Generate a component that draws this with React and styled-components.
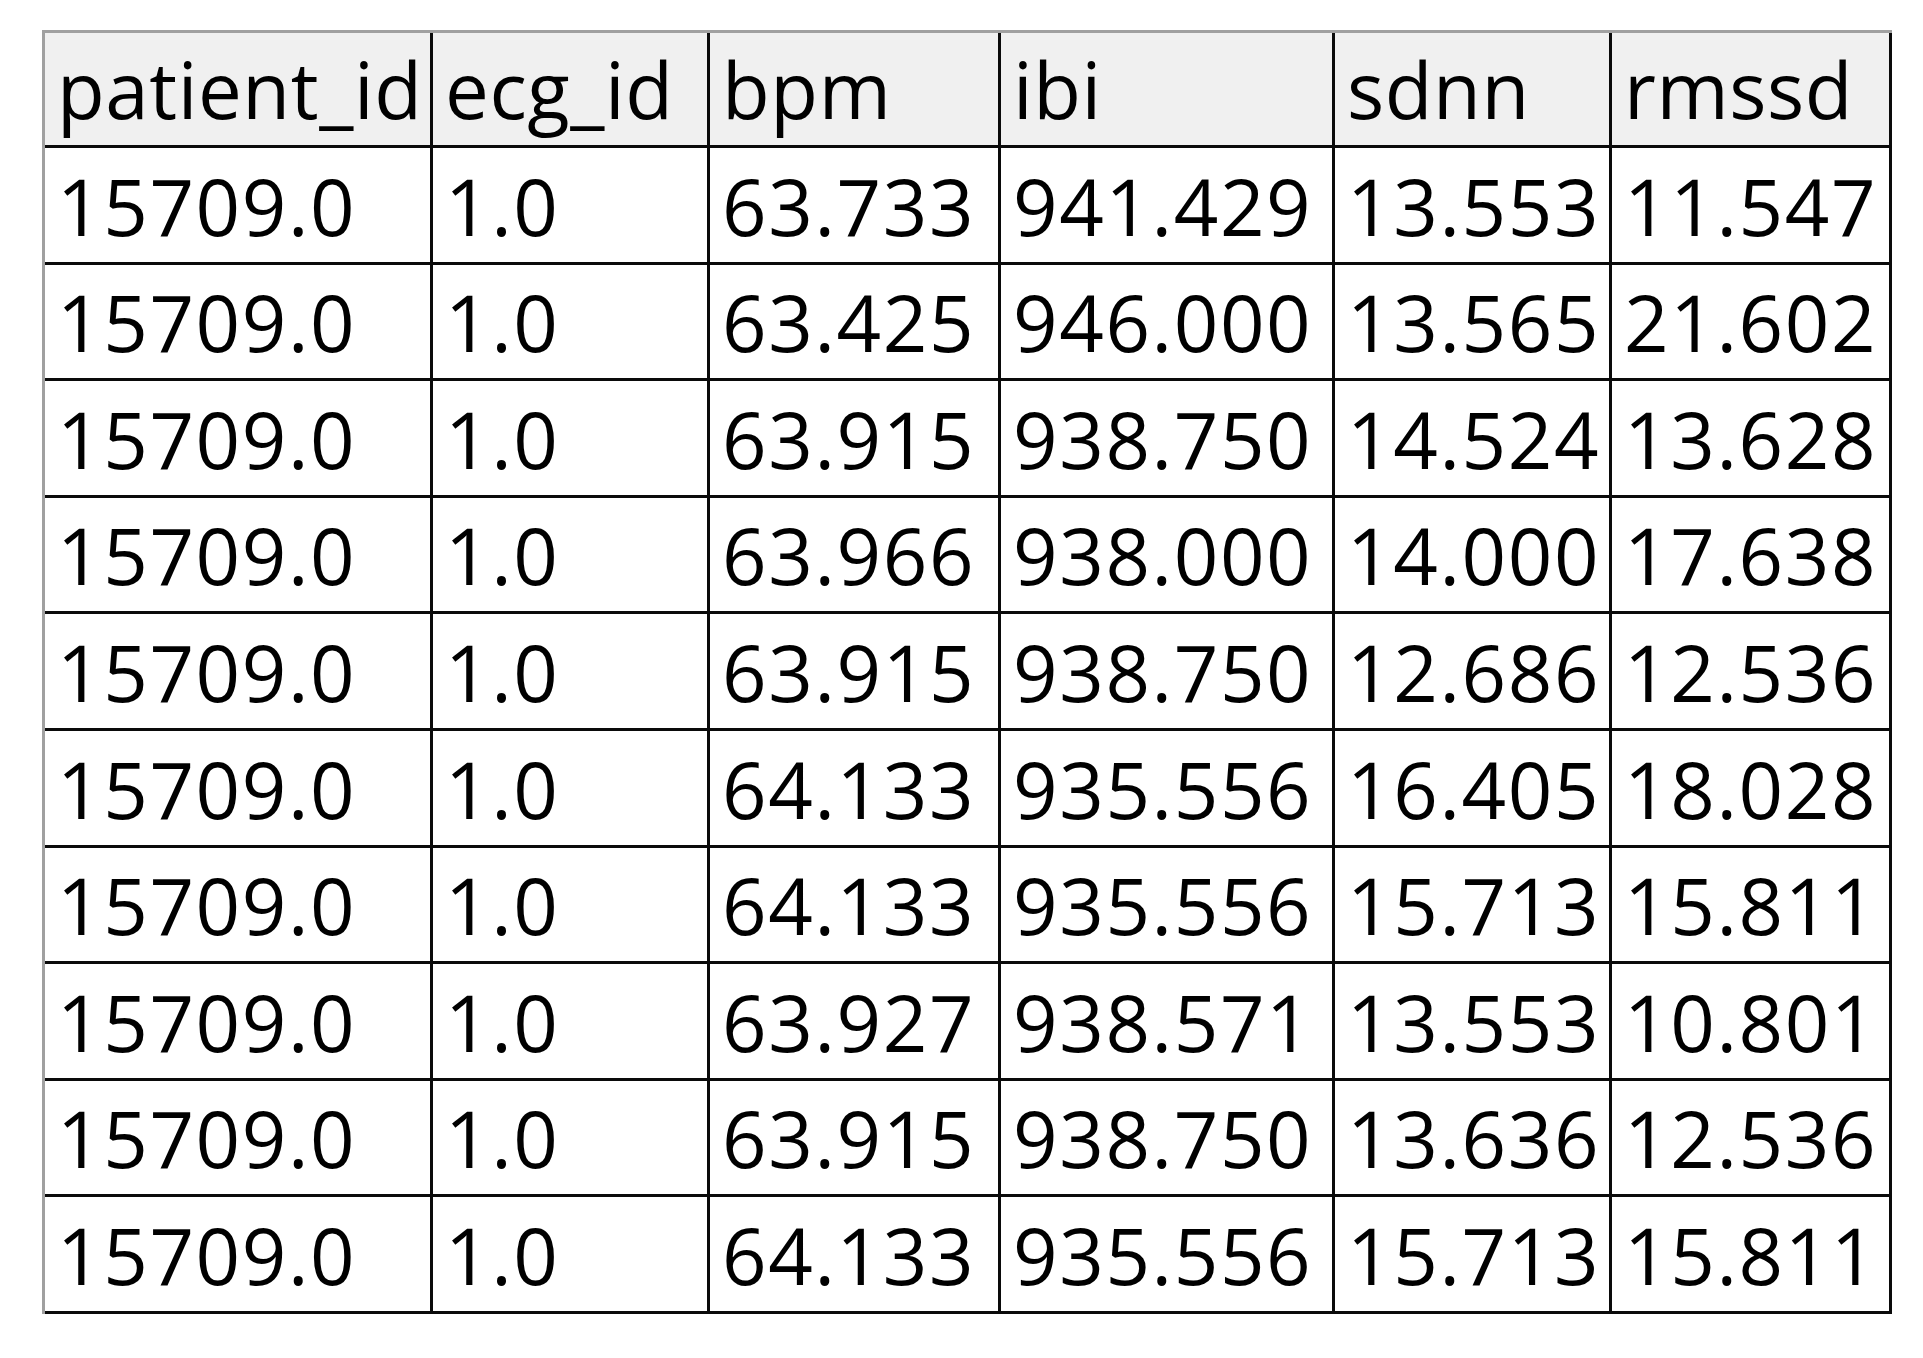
import React from "react";
import styled, { createGlobalStyle } from "styled-components";

const GlobalStyle = createGlobalStyle`
  html, body {
    margin: 0;
    padding: 0;
    background: #ffffff;
  }
  body {
    font-family: "Open Sans", "Liberation Sans", sans-serif;
    color: #000000;
  }
`;

const Page = styled.div`
  padding: 30px 0 0 42px;
`;

const Sheet = styled.div`
  display: grid;
  grid-template-columns: 388px 277px 291px 334px 277px 280px;
  grid-template-rows: 115px repeat(10, 116.6px);
  width: max-content;
  border-top: 3px solid #a0a0a0;
  border-left: 3px solid #a0a0a0;
`;

const Cell = styled.div`
  display: flex;
  align-items: flex-end;
  box-sizing: border-box;
  padding: 0 0 17px 12px;
  border-right: 3px solid #0a0a0a;
  border-bottom: 3px solid #0a0a0a;
  background: ${(p) => (p.$header ? "#f0f0f0" : "#ffffff")};
  font-family: "Open Sans", "Liberation Sans", sans-serif;
  font-size: 78px;
  line-height: 78px;
  letter-spacing: ${(p) => (p.$header ? "0.6px" : "1.6px")};
  white-space: nowrap;
  overflow: hidden;
  color: #000000;
`;

const columns = ["patient_id", "ecg_id", "bpm", "ibi", "sdnn", "rmssd"];

const rows = [
  ["15709.0", "1.0", "63.733", "941.429", "13.553", "11.547"],
  ["15709.0", "1.0", "63.425", "946.000", "13.565", "21.602"],
  ["15709.0", "1.0", "63.915", "938.750", "14.524", "13.628"],
  ["15709.0", "1.0", "63.966", "938.000", "14.000", "17.638"],
  ["15709.0", "1.0", "63.915", "938.750", "12.686", "12.536"],
  ["15709.0", "1.0", "64.133", "935.556", "16.405", "18.028"],
  ["15709.0", "1.0", "64.133", "935.556", "15.713", "15.811"],
  ["15709.0", "1.0", "63.927", "938.571", "13.553", "10.801"],
  ["15709.0", "1.0", "63.915", "938.750", "13.636", "12.536"],
  ["15709.0", "1.0", "64.133", "935.556", "15.713", "15.811"],
];

export default function App() {
  return (
    <>
      <GlobalStyle />
      <Page>
        <Sheet role="table">
          {columns.map((c) => (
            <Cell key={c} $header role="columnheader">
              {c}
            </Cell>
          ))}
          {rows.map((r, i) =>
            r.map((v, j) => (
              <Cell key={`${i}-${j}`} role="cell">
                {v}
              </Cell>
            ))
          )}
        </Sheet>
      </Page>
    </>
  );
}
